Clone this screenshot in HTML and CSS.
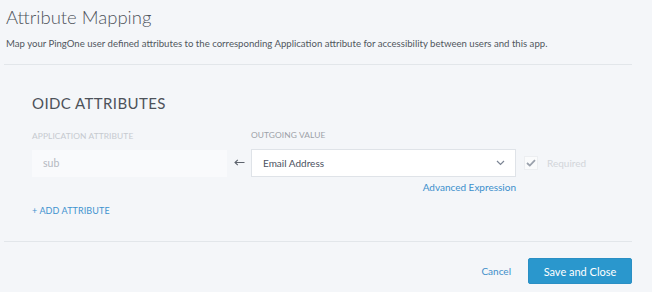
FILE: index.html
```html
<!DOCTYPE html>
<html>
<head>
<meta charset="utf-8">
<link rel="stylesheet" href="styles.css">
</head>
<body>
<div class="page">
  <header class="head">
    <h1 class="title">Attribute Mapping</h1>
    <p class="desc">Map your PingOne user defined attributes to the corresponding Application attribute for accessibility between users and this app.</p>
  </header>
  <section class="panel">
    <h2 class="section-title">OIDC ATTRIBUTES</h2>
    <div class="mapping">
      <div class="col app-col">
        <div class="label">APPLICATION ATTRIBUTE</div>
        <div class="input">sub</div>
      </div>
      <div class="arrow">
        <svg width="11" height="7" viewBox="0 0 11 7"><path d="M10.5 3.5H1M3.8 0.8L1 3.5L3.8 6.2" fill="none" stroke="#5d636d" stroke-width="1.1"/></svg>
      </div>
      <div class="col out-col">
        <div class="label">OUTGOING VALUE</div>
        <div class="select">
          <span>Email Address</span>
          <svg class="chev" width="9" height="6" viewBox="0 0 9 6"><path d="M1 1L4.5 4.5L8 1" fill="none" stroke="#7c8594" stroke-width="1.2"/></svg>
        </div>
        <a class="adv">Advanced Expression</a>
      </div>
      <div class="required">
        <span class="checkbox"><svg width="10" height="8" viewBox="0 0 10 8"><path d="M1 4L3.8 6.6L9 1.2" fill="none" stroke="#9aa1ac" stroke-width="1.8"/></svg></span>
        <span class="req-text">Required</span>
      </div>
    </div>
    <a class="add">+ ADD ATTRIBUTE</a>
  </section>
  <footer class="foot">
    <a class="cancel">Cancel</a>
    <button class="save">Save and Close</button>
  </footer>
</div>
</body>
</html>
```

FILE: styles.css
```css
html, body {
  margin: 0;
  padding: 0;
  background: #f4f6f9;
}
body {
  font-family: Lato, "Open Sans", "Liberation Sans", sans-serif;
  color: #50555e;
}
.page {
  width: 628px;
  margin-left: 4px;
}
.head {
  padding: 5px 0 0 2px;
  border-bottom: 1px solid #e2e6ea;
  box-sizing: border-box;
  height: 65px;
}
.title {
  margin: 0;
  font-size: 18.5px;
  font-weight: 300;
  line-height: 24px;
  color: #4e535b;
}
.desc {
  margin: 8px 0 0 0;
  font-size: 9.6px;
  line-height: 14px;
  color: #51565e;
}
.panel {
  padding: 29px 0 0 28px;
  height: 177px;
  box-sizing: border-box;
  border-bottom: 1px solid #e2e6ea;
}
.section-title {
  margin: 0;
  font-size: 15px;
  font-weight: 400;
  line-height: 18px;
  letter-spacing: 0.4px;
  color: #4d525a;
}
.mapping {
  display: flex;
  align-items: flex-start;
  margin-top: 18px;
}
.col {
  display: flex;
  flex-direction: column;
}
.label {
  font-size: 8.4px;
  line-height: 10px;
  letter-spacing: 0.1px;
  color: #c6cad0;
  margin-bottom: 9px;
}
.out-col .label {
  color: #9ca1a8;
}
.app-col {
  width: 195px;
  padding-top: 1px;
}
.input {
  height: 27px;
  background: #f9fafc;
  box-sizing: border-box;
  padding-left: 11px;
  font-size: 10.5px;
  line-height: 27px;
  color: #b4b8bf;
}
.arrow {
  width: 24px;
  display: flex;
  justify-content: center;
  padding-top: 29px;
}
.out-col {
  width: 265px;
}
.select {
  height: 28px;
  box-sizing: border-box;
  background: #ffffff;
  border: 1px solid #dfe3e8;
  display: flex;
  align-items: center;
  justify-content: space-between;
  padding: 0 10px 0 11px;
  font-size: 10px;
  color: #4b5160;
}
.adv {
  align-self: flex-end;
  margin-top: 4px;
  font-size: 10px;
  line-height: 12px;
  color: #3b8fcc;
}
.required {
  display: flex;
  align-items: center;
  margin-left: 8px;
  margin-top: 26px;
}
.checkbox {
  width: 14px;
  height: 14px;
  box-sizing: border-box;
  background: #fafbfc;
  border: 1px solid #eceef1;
  display: flex;
  align-items: center;
  justify-content: center;
}
.req-text {
  margin-left: 9px;
  font-size: 10px;
  color: #d2d5da;
}
.add {
  display: block;
  margin-top: 12px;
  font-size: 9px;
  line-height: 12px;
  color: #3f93cf;
  letter-spacing: 0.1px;
}
.foot {
  display: flex;
  justify-content: flex-end;
  align-items: center;
  padding-top: 16px;
}
.cancel {
  font-size: 10px;
  color: #3f8fc9;
  margin-right: 17px;
}
.save {
  width: 104px;
  height: 26px;
  border: 1px solid #2a8fc4;
  border-radius: 2px;
  background: #2a97cd;
  color: #ffffff;
  font-family: Lato, "Open Sans", "Liberation Sans", sans-serif;
  font-size: 11px;
  padding: 0;
}
```
